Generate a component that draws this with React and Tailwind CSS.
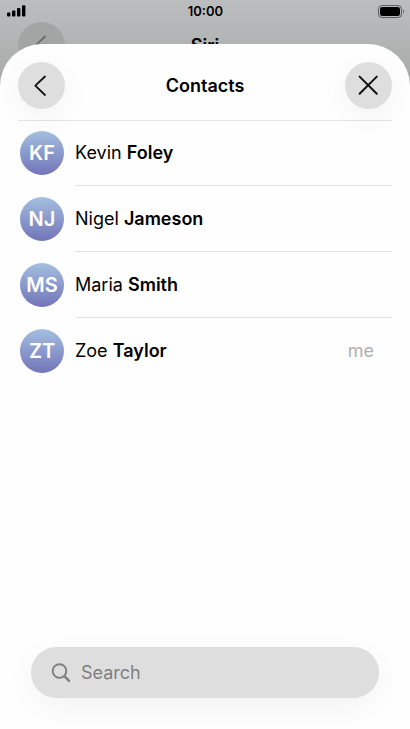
import React from 'react';

const contacts = [
  { initials: 'KF', first: 'Kevin', last: 'Foley' },
  { initials: 'NJ', first: 'Nigel', last: 'Jameson' },
  { initials: 'MS', first: 'Maria', last: 'Smith' },
  { initials: 'ZT', first: 'Zoe', last: 'Taylor', note: 'me' },
];

const ChevronLeft = () => (
  <svg viewBox="0 0 47 47" className="w-full h-full" fill="none" stroke="currentColor" strokeWidth="1.8" strokeLinecap="round" strokeLinejoin="round">
    <path d="M27 14.500L17.300 23.700L27 33" />
  </svg>
);

const StatusBar = () => (
  <div className="grid grid-cols-3 items-center h-[22px] pl-[7px] pr-1.5 text-black">
    <svg viewBox="0 0 19 12" className="w-[19px] h-3" fill="currentColor">
      <rect x="0" y="7.5" width="3.4" height="4" rx="1" />
      <rect x="5" y="5.5" width="3.4" height="6" rx="1" />
      <rect x="10" y="3" width="3.4" height="8.5" rx="1" />
      <rect x="15" y="0.3" width="3.4" height="11.2" rx="1" />
    </svg>
    <span className="text-center text-[13px] leading-5 font-semibold">10:00</span>
    <svg viewBox="0 0 26 13" className="w-[26px] h-[13px] justify-self-end">
      <rect x="0.5" y="0.5" width="23" height="12" rx="3.5" fill="none" stroke="#000" strokeOpacity="0.5" />
      <rect x="2" y="2" width="20" height="9" rx="2.2" fill="#000" />
      <path d="M25 4.6v3.8c.7-.4 1-1.1 1-1.9s-.3-1.5-1-1.9z" fill="#000" fillOpacity="0.5" />
    </svg>
  </div>
);

const ContactRow = ({ contact }) => (
  <li className="group flex gap-[11px] pl-0.5">
    <div className="flex items-center h-16">
      <div className="w-11 h-11 rounded-full flex items-center justify-center bg-linear-to-b from-[#a4bfe0] to-[#7275b8] text-white text-xl font-semibold">
        {contact.initials}
      </div>
    </div>
    <div className="flex-1 h-[65px] flex items-center justify-between pr-[18px] border-b border-[#e2e2e2] text-lg text-black group-last:border-transparent">
      <span>
        {contact.first} <span className="font-semibold">{contact.last}</span>
      </span>
      {contact.note && <span className="text-[#b0b0b0]">{contact.note}</span>}
    </div>
  </li>
);

const App = () => {
  return (
    <div className="min-h-screen flex flex-col bg-linear-to-b from-[#bcbdbf] to-[#a4a7a5] to-[100px] font-['Inter',sans-serif]">
      <StatusBar />

      {/* page underneath the sheet */}
      <div className="h-[47px] grid grid-cols-[47px_1fr_47px] items-center px-[18px]" aria-hidden="true">
        <div className="w-[47px] h-[47px] rounded-full bg-[#a3a5a5] text-[#686a6a]">
          <ChevronLeft />
        </div>
        <p className="text-center text-lg font-semibold text-black">Siri</p>
      </div>

      <main className="relative flex-1 flex flex-col -mt-[25px] rounded-t-[42px] bg-[#fefefe]">
        <header className="mx-[18px] h-[77px] pt-[18px] border-b border-[#e4e4e4] flex items-start justify-between">
          <button type="button" aria-label="Back" className="w-[47px] h-[47px] rounded-full bg-[#dedede] text-[#111] shadow-[0_8px_30px_rgba(0,0,0,0.05)]">
            <ChevronLeft />
          </button>
          <h1 className="text-lg leading-[47px] font-semibold text-black">Contacts</h1>
          <button type="button" aria-label="Close" className="w-[47px] h-[47px] rounded-full bg-[#dedede] text-[#111] shadow-[0_8px_30px_rgba(0,0,0,0.05)]">
            <svg viewBox="0 0 47 47" className="w-full h-full" fill="none" stroke="currentColor" strokeWidth="2" strokeLinecap="round">
              <path d="M14.6 14.6L31.800 31.800M31.800 14.600L14.600 31.800" />
            </svg>
          </button>
        </header>

        <ul className="flex flex-col gap-px mx-[18px]">
          {contacts.map((contact) => (
            <ContactRow key={contact.initials} contact={contact} />
          ))}
        </ul>

        <label className="mt-auto mb-[31px] mx-[31px] h-[51px] px-5 rounded-full bg-[#dedede] flex items-center gap-2.5 text-[#7f7f81] shadow-[0_8px_30px_rgba(0,0,0,0.05)]">
          <svg viewBox="0 0 20 20" className="w-5 h-5 shrink-0" fill="none" stroke="currentColor" strokeLinecap="round">
            <circle cx="8.5" cy="8" r="6.8" strokeWidth="1.9" />
            <path d="M13.5 13.2L18 17.8" strokeWidth="2.5" />
          </svg>
          <input type="text" placeholder="Search" aria-label="Search" className="flex-1 min-w-0 bg-transparent outline-none text-lg placeholder:text-[#7f7f81]" />
        </label>
      </main>
    </div>
  );
};

export default App;
